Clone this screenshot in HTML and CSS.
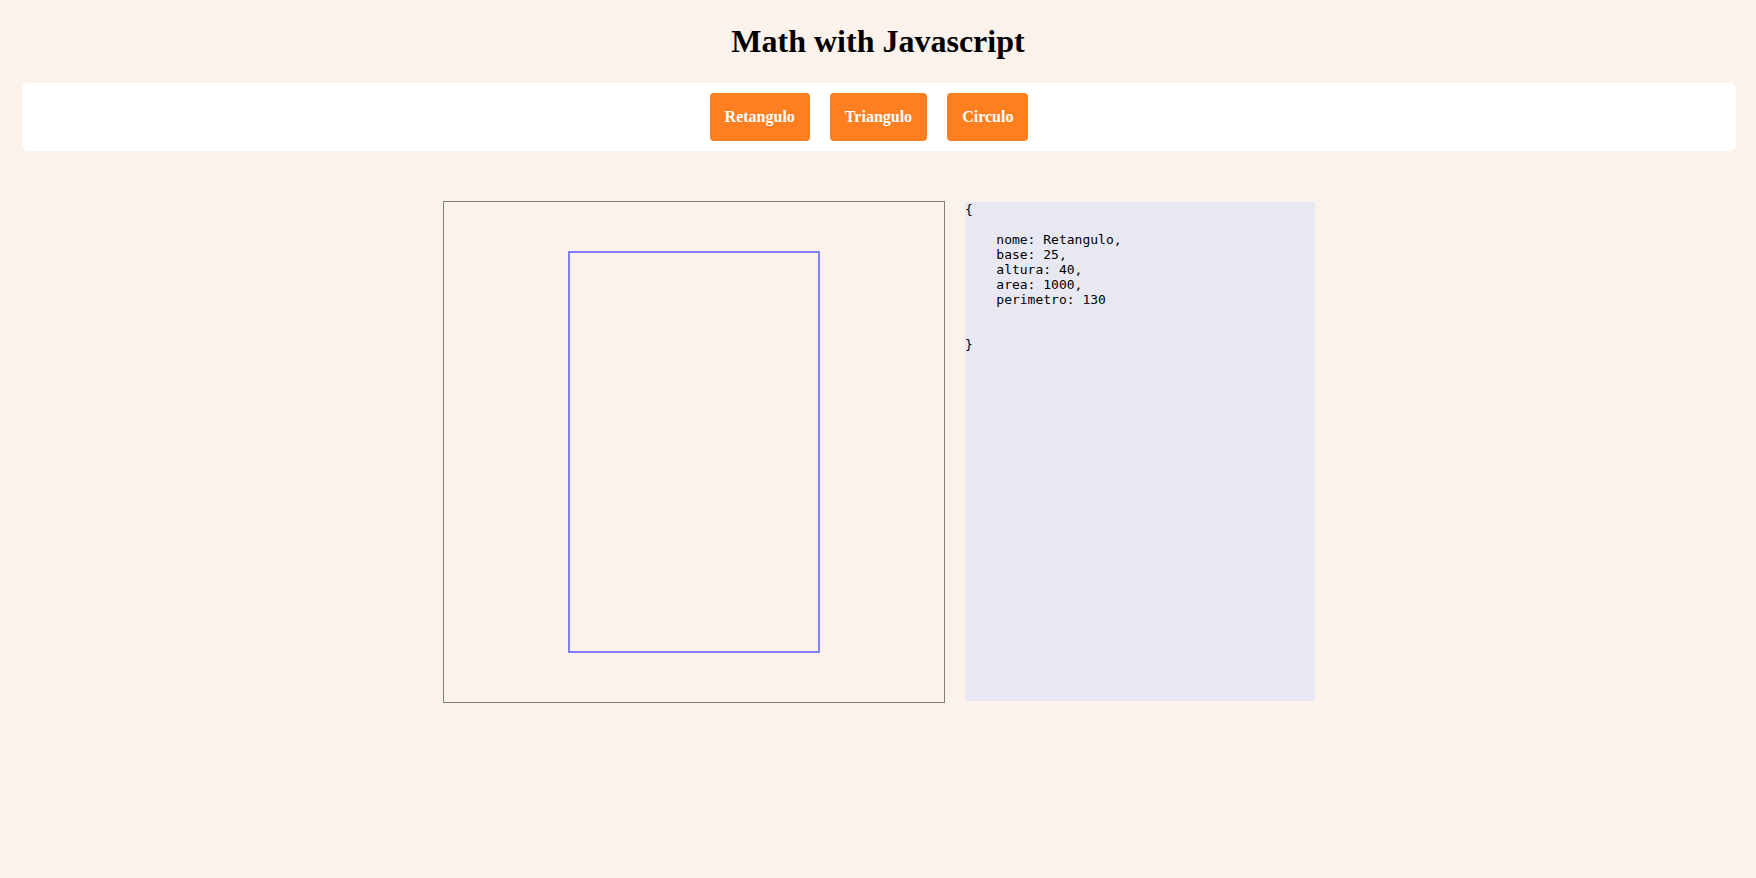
FILE: index.html
```
<!DOCTYPE html>
<html lang="pt">
<head>
<meta charset="utf-8">
<title>Math with Javascript</title>
<link rel="stylesheet" href="styles.css">
</head>
<body>
<h1 class="title">Math with Javascript</h1>
<nav class="menu">
  <button class="btn">Retangulo</button>
  <button class="btn">Triangulo</button>
  <button class="btn">Circulo</button>
</nav>
<main class="stage">
  <div class="board">
    <svg class="shape" width="500" height="500" viewBox="0 0 500 500">
      <rect x="125" y="50" width="250" height="400" fill="none" stroke="#8080ff" stroke-width="2"/>
    </svg>
  </div>
<pre class="output">{

    nome: Retangulo,
    base: 25,
    altura: 40,
    area: 1000,
    perimetro: 130


}</pre>
</main>
</body>
</html>
```
FILE: styles.css
```
html, body {
  margin: 0;
  padding: 0;
}
body {
  background: #fcf2ec;
  font-family: "Liberation Serif", "Times New Roman", serif;
  color: #000;
}
.title {
  margin: 23px 0 0;
  font-size: 32px;
  line-height: 37px;
  font-weight: bold;
  text-align: center;
}
.menu {
  margin: 23px 20px 0 22px;
  padding: 10px 20px 10px 0;
  background: #ffffff;
  border-radius: 6px;
  display: flex;
  justify-content: center;
  gap: 20px;
}
.btn {
  background: #fd7f20;
  color: #ffffff;
  border: none;
  border-radius: 4px;
  font-family: "Liberation Serif", "Times New Roman", serif;
  font-weight: bold;
  font-size: 16px;
  line-height: 18px;
  padding: 15px 15px;
  margin: 0;
}
.stage {
  margin-top: 50px;
  padding-left: 2px;
  display: flex;
  justify-content: center;
  align-items: flex-start;
  gap: 20px;
}
.board {
  width: 500px;
  height: 500px;
  border: 1px solid #808080;
}
.shape {
  display: block;
}
.output {
  margin: 1px 0 0;
  width: 350px;
  height: 499px;
  background: #e8e8f2;
  font-family: "DejaVu Sans Mono", monospace;
  font-size: 13px;
  line-height: 15px;
  color: #000;
}
```
